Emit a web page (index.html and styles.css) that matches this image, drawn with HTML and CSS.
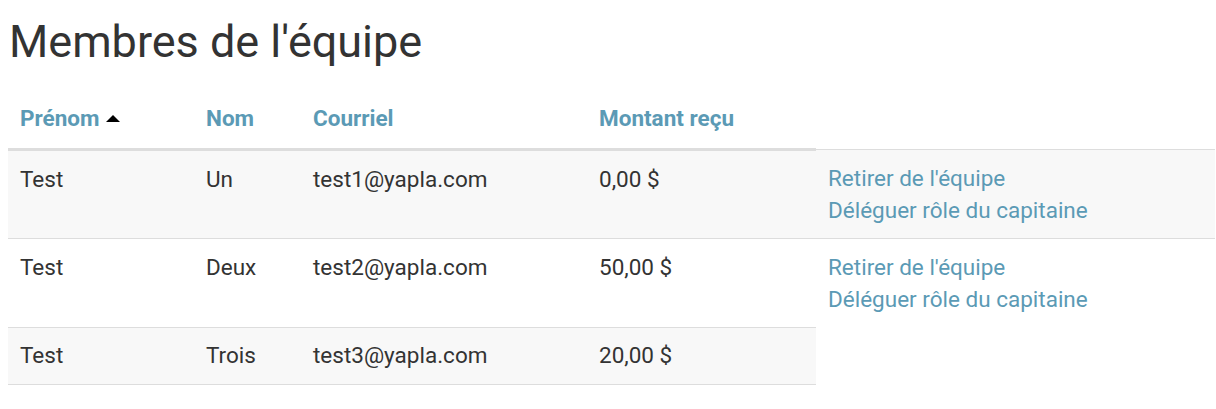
FILE: index.html
```html
<!DOCTYPE html>
<html lang="fr">
<head>
<meta charset="utf-8">
<title>Membres de l'équipe</title>
<link rel="stylesheet" href="styles.css">
</head>
<body>
<h1 class="title">Membres de l'équipe</h1>
<table class="members">
  <colgroup>
    <col class="c-first"><col class="c-last"><col class="c-mail"><col class="c-amount"><col class="c-actions">
  </colgroup>
  <thead>
    <tr>
      <th><a class="sort" href="#">Prénom</a><span class="caret"></span></th>
      <th><a class="sort" href="#">Nom</a></th>
      <th><a class="sort" href="#">Courriel</a></th>
      <th><a class="sort" href="#">Montant reçu</a></th>
    </tr>
  </thead>
  <tbody>
    <tr class="odd">
      <td>Test</td><td>Un</td><td>test1@yapla.com</td><td>0,00 $</td>
      <td class="actions"><a href="#">Retirer de l'équipe</a><a href="#">Déléguer rôle du capitaine</a></td>
    </tr>
    <tr>
      <td>Test</td><td>Deux</td><td>test2@yapla.com</td><td>50,00 $</td>
      <td class="actions"><a href="#">Retirer de l'équipe</a><a href="#">Déléguer rôle du capitaine</a></td>
    </tr>
    <tr class="odd">
      <td>Test</td><td>Trois</td><td>test3@yapla.com</td><td>20,00 $</td>
    </tr>
  </tbody>
  <tfoot>
    <tr><td></td><td></td><td></td><td></td></tr>
  </tfoot>
</table>
</body>
</html>
```
FILE: styles.css
```css
html, body {
  margin: 0;
  padding: 0;
  background: #fff;
}
body {
  padding-left: 8px;
  font-family: Roboto, "Liberation Sans", sans-serif;
  color: #333;
  overflow: hidden;
}
.title {
  margin: 17px 0 0 1px;
  font-size: 45px;
  font-weight: 400;
  line-height: 49.5px;
  color: #333;
}
.members {
  margin-top: 35.5px;
  border-collapse: collapse;
  width: 1207px;
  font-size: 22.5px;
  table-layout: fixed;
}
.c-first { width: 186px; }
.c-last { width: 107px; }
.c-mail { width: 286px; }
.c-amount { width: 229px; }
.members th {
  text-align: left;
  padding: 0 12px 14px;
  line-height: 32px;
  border-bottom: 3px solid #ddd;
  font-weight: 700;
}
.sort {
  color: #5b9ab5;
  text-decoration: none;
}
.caret {
  display: inline-block;
  width: 0;
  height: 0;
  margin-left: 6px;
  vertical-align: 4px;
  border-left: 7px solid transparent;
  border-right: 7px solid transparent;
  border-bottom: 7px solid #000;
}
.members td {
  padding: 11.5px 12px 12.5px;
  line-height: 32px;
  vertical-align: top;
  border-top: 1px solid #ddd;
}
.members tr.odd {
  background: #f8f8f8;
}
.actions a {
  display: block;
  color: #5b9ab5;
  text-decoration: none;
}
.members tfoot td {
  padding: 0;
  height: 0;
}
```
